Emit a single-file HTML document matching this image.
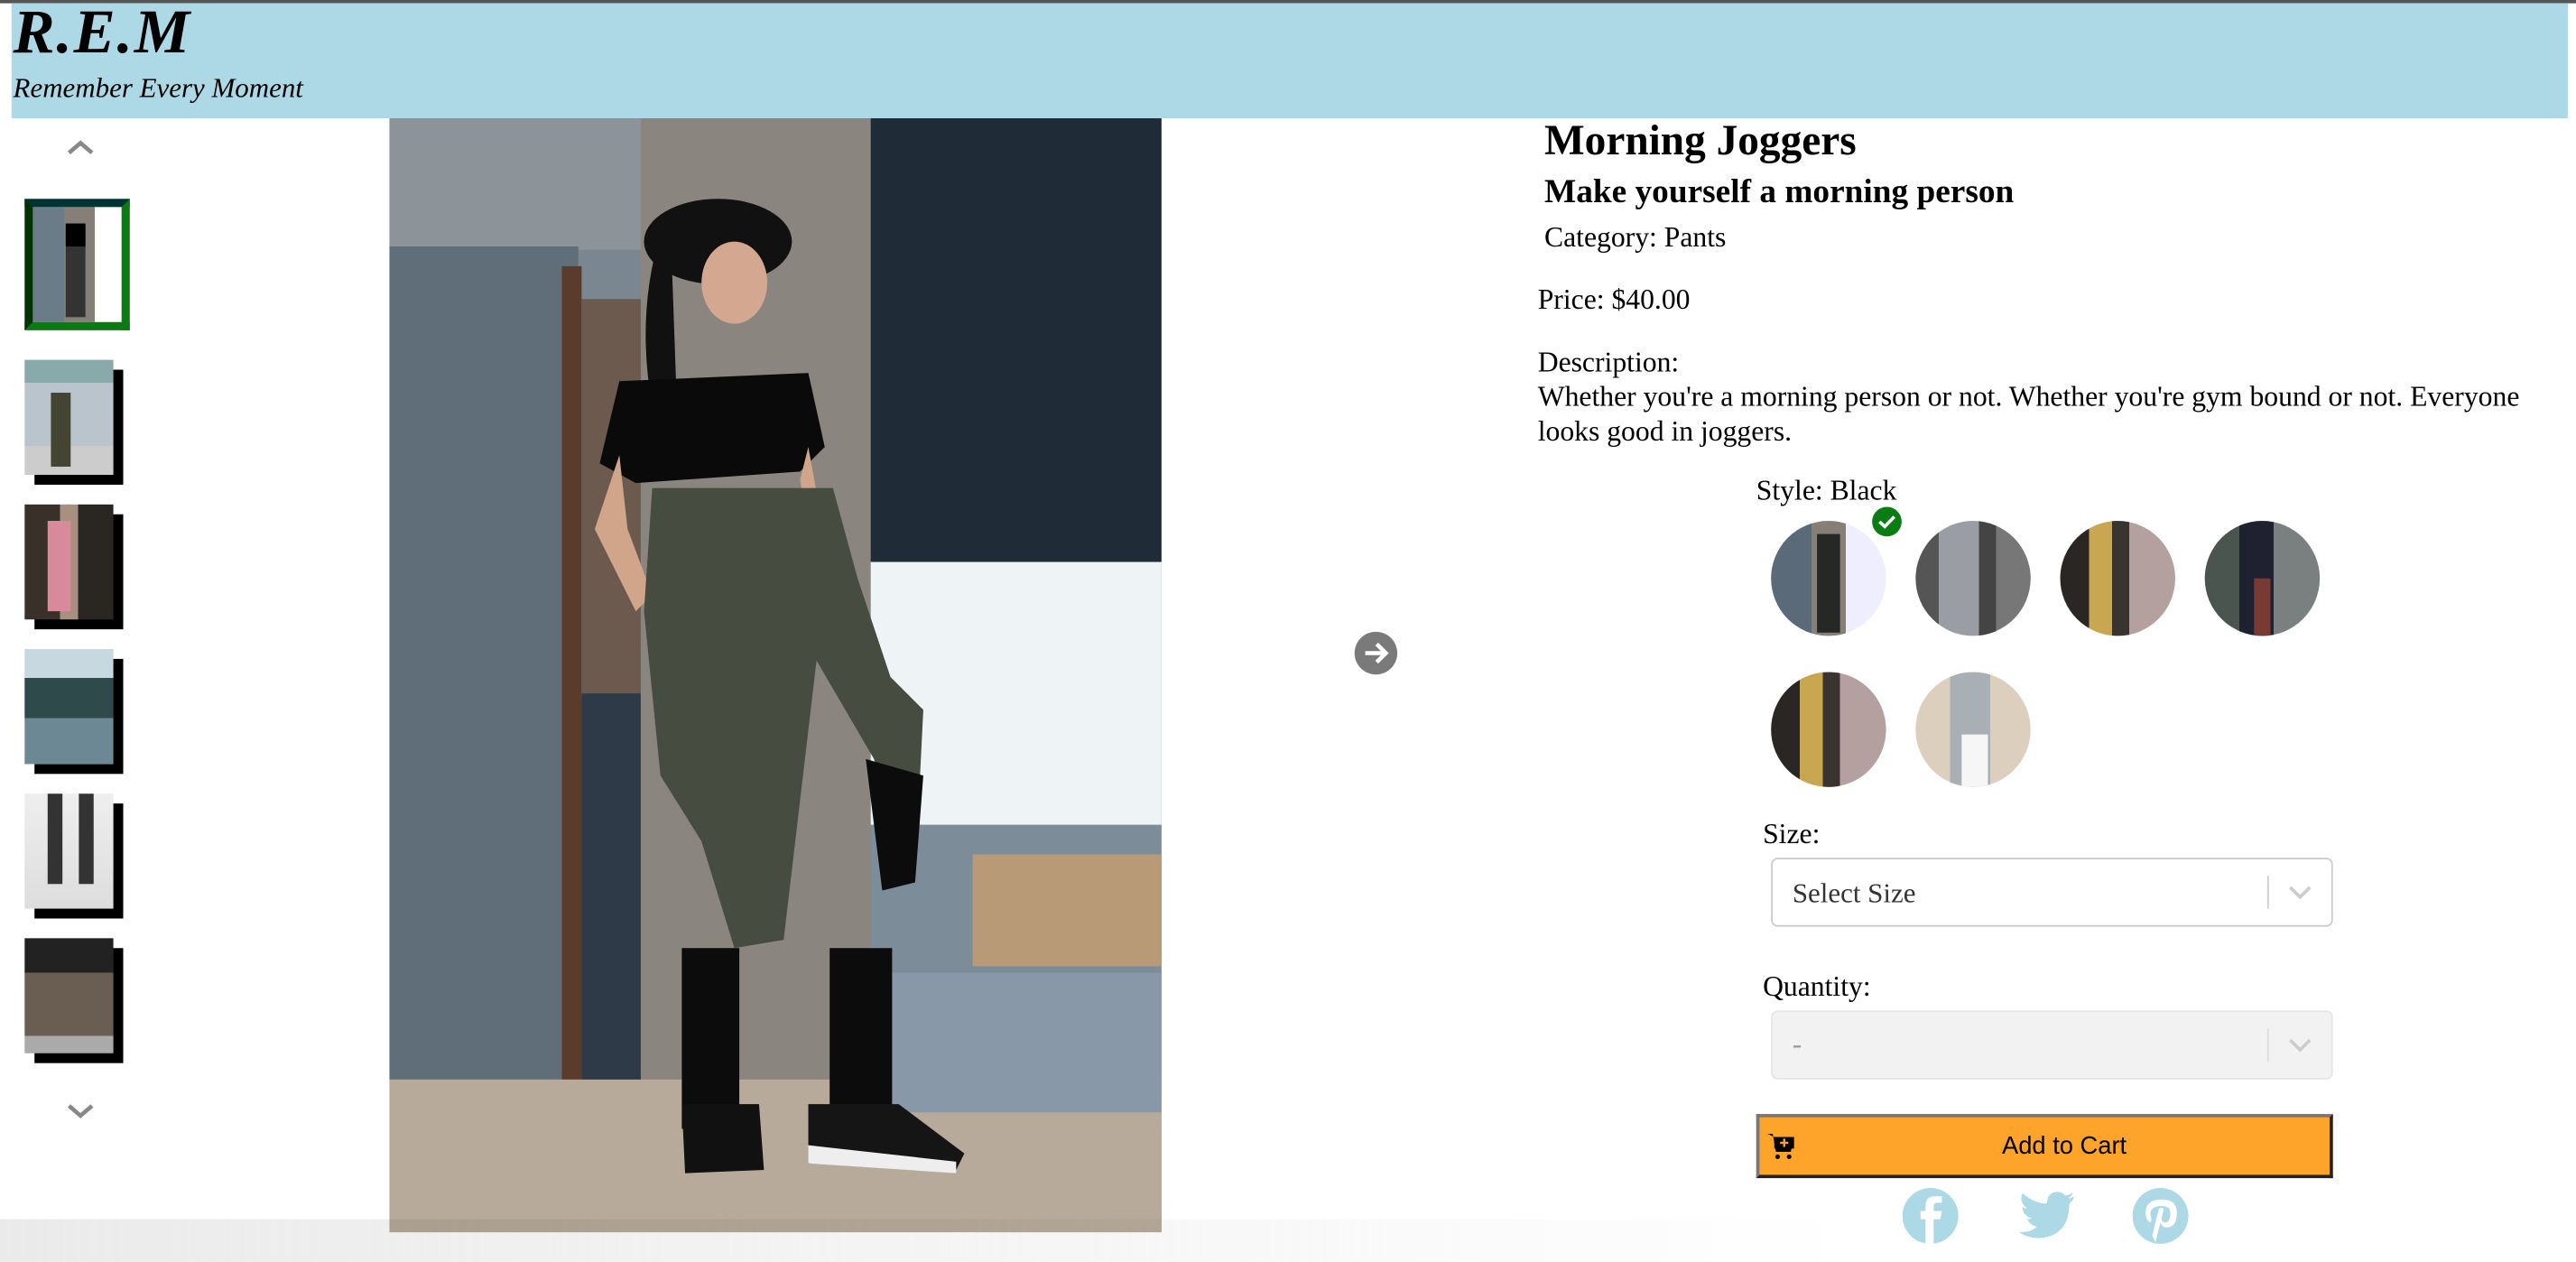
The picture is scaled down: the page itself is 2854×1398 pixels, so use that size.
<!DOCTYPE html>
<html><head><meta charset="utf-8"><style>
html,body{margin:0;padding:0;width:2854px;height:1398px;overflow:hidden;background:#fff}
#w{position:absolute;left:0;top:0;width:1568px;height:768px;transform:scale(1.8202);transform-origin:0 0;font-family:"Liberation Serif",serif;color:#000;background:#fff}
.a{position:absolute}
.t{position:absolute;white-space:nowrap}
.th{position:absolute;left:15px;width:54px;height:70px;box-shadow:6px 6px 0 #000;overflow:hidden}
.circ{position:absolute;width:70px;height:70px;border-radius:50%;overflow:hidden}
.sel{position:absolute;left:1078px;width:340px;height:40px;border:1px solid #ccc;border-radius:4px;background:#fff}
.b{font-size:17.4px}
</style></head><body><div id="w">
<div class="a" style="left:0;top:0;width:1568px;height:2px;background:#555"></div>
<div class="a" style="left:7px;top:2px;width:1556px;height:70px;background:#add8e6"></div>
<div class="t" style="left:8px;top:-2px;font-size:38px;font-weight:bold;font-style:italic;letter-spacing:1px">R.E.M</div>
<div class="t" style="left:8px;top:44px;font-size:17px;font-style:italic">Remember Every Moment</div>

<svg class="a" style="left:40px;top:84px" width="18" height="12"><path d="M2 9 L9 3 L16 9" stroke="#888" stroke-width="2.5" fill="none"/></svg>
<svg class="a" style="left:40px;top:670px" width="18" height="12"><path d="M2 3 L9 9 L16 3" stroke="#888" stroke-width="2.5" fill="none"/></svg>

<div class="a" style="left:15px;top:121px;width:54px;height:70px;border:5px solid #0a7a12;border-top-color:#033;border-left-color:#030;overflow:hidden;background:linear-gradient(90deg,#6a7c88 0 35%,#857f78 35% 70%,#fff 70%)">
<div class="a" style="left:20px;top:12px;width:12px;height:55px;background:#333"></div><div class="a" style="left:20px;top:10px;width:12px;height:14px;background:#000"></div></div>
<div class="th" style="top:219px;background:linear-gradient(#8aa 0 20%,#b9c4cc 20% 75%,#ccc 75%)"><div class="a" style="left:16px;top:20px;width:12px;height:45px;background:#443"></div></div>
<div class="th" style="top:307px;background:linear-gradient(90deg,#3a302a 0 40%,#a89080 40% 60%,#2a2622 60%)"><div class="a" style="left:14px;top:10px;width:14px;height:55px;background:#d88a9a"></div></div>
<div class="th" style="top:395px;background:linear-gradient(#c8d8e0 0 25%,#2f4a4a 25% 60%,#6c8894 60%)"></div>
<div class="th" style="top:483px;background:linear-gradient(#eee,#ddd)"><div class="a" style="left:14px;top:0;width:9px;height:55px;background:#333"></div><div class="a" style="left:33px;top:0;width:9px;height:55px;background:#333"></div></div>
<div class="th" style="top:571px;background:linear-gradient(#222 0 30%,#6a5e52 30% 85%,#aaa 85%)"></div>

<svg class="a" style="left:237px;top:72px" width="470" height="678" viewBox="0 0 470 678">
<rect width="470" height="678" fill="#7b8790"/>
<rect x="0" y="0" width="155" height="80" fill="#8d9499"/>
<rect x="0" y="78" width="115" height="507" fill="#5f6e79"/>
<rect x="105" y="90" width="12" height="495" fill="#5a3b2c"/>
<rect x="117" y="110" width="38" height="480" fill="#6d5a4f"/>
<rect x="117" y="350" width="38" height="240" fill="#2e3a47"/>
<rect x="153" y="0" width="140" height="600" fill="#8a857f"/>
<rect x="293" y="0" width="177" height="270" fill="#1f2b37"/>
<rect x="293" y="270" width="177" height="160" fill="#eef3f6"/>
<rect x="293" y="430" width="177" height="165" fill="#7c8c98"/>
<rect x="355" y="448" width="115" height="68" fill="#b89a76"/>
<rect x="0" y="585" width="470" height="93" fill="#b7aa9a"/>
<rect x="293" y="520" width="177" height="85" fill="#8898a8"/>
<ellipse cx="200" cy="75" rx="45" ry="26" fill="#111"/>
<path d="M165 70 Q150 120 160 175 L175 175 L172 90Z" fill="#111"/>
<ellipse cx="210" cy="100" rx="20" ry="25" fill="#d4a890"/>
<path d="M140 160 L255 155 L265 200 L250 215 L150 222 L128 210Z" fill="#0a0a0a"/>
<path d="M140 205 L125 250 L150 300 L160 290 L145 250Z" fill="#d0a58a"/>
<path d="M255 200 L275 310 L265 315 L250 220Z" fill="#d0a58a"/>
<path d="M160 225 L270 225 L285 280 L305 340 L325 360 L322 420 L305 425 L295 390 L260 330 L240 500 L210 505 L190 440 L165 400 L155 300Z" fill="#474c40"/>
<path d="M290 390 L325 400 L320 465 L300 470Z" fill="#0c0c0c"/>
<rect x="178" y="505" width="35" height="110" fill="#0c0c0c"/>
<rect x="268" y="505" width="38" height="100" fill="#0c0c0c"/>
<path d="M178 600 L225 600 L228 640 L180 642Z" fill="#111"/>
<path d="M255 600 L310 600 L350 630 L345 640 L255 636Z" fill="#151515"/>
<path d="M255 625 L345 635 L345 642 L255 636Z" fill="#eee"/>
</svg>

<svg class="a" style="left:824px;top:384px" width="27" height="27"><circle cx="13.5" cy="13.5" r="13" fill="#7a7a7a"/><path d="M7 13.5 H19 M14 8 L19.5 13.5 L14 19" stroke="#fff" stroke-width="2.5" fill="none"/></svg>

<div class="t" style="left:940px;top:71px;font-size:26px;font-weight:bold">Morning Joggers</div>
<div class="t" style="left:940px;top:106px;font-size:20.5px;font-weight:bold">Make yourself a morning person</div>
<div class="t b" style="left:940px;top:134px">Category: Pants</div>
<div class="t b" style="left:936px;top:172px">Price: $40.00</div>
<div class="t b" style="left:936px;top:210px">Description:</div>
<div class="a b" style="left:936px;top:231px;width:612px;line-height:21px">Whether you're a morning person or not. Whether you're gym bound or not. Everyone looks good in joggers.</div>

<div class="t b" style="left:1069px;top:288px">Style: Black</div>
<div class="circ" style="left:1078px;top:317px;background:linear-gradient(90deg,#5a6a78 0 35%,#857f78 35% 65%,#eef 65%)"><div class="a" style="left:28px;top:8px;width:14px;height:60px;background:#252825"></div></div>
<div class="circ" style="left:1166px;top:317px;background:linear-gradient(90deg,#555 0 20%,#9a9ea4 20% 55%,#444 55% 70%,#777 70%)"></div>
<div class="circ" style="left:1254px;top:317px;background:linear-gradient(90deg,#2a2624 0 25%,#c9a650 25% 45%,#3a3430 45% 60%,#b5a0a0 60%)"></div>
<div class="circ" style="left:1342px;top:317px;background:linear-gradient(90deg,#4a5550 0 30%,#1f2030 30% 60%,#7a8080 60%)"><div class="a" style="left:30px;top:35px;width:10px;height:35px;background:#7a3a34"></div></div>
<div class="circ" style="left:1078px;top:409px;background:linear-gradient(90deg,#2a2624 0 25%,#c9a650 25% 45%,#3a3430 45% 60%,#b5a0a0 60%)"></div>
<div class="circ" style="left:1166px;top:409px;background:linear-gradient(90deg,#dccfbd 0 30%,#a8b0b6 30% 65%,#dccfbd 65%)"><div class="a" style="left:28px;top:38px;width:16px;height:32px;background:#f6f6f6"></div></div>
<svg class="a" style="left:1139px;top:308px" width="19" height="19"><circle cx="9.5" cy="9.5" r="9" fill="#0a7d12"/><path d="M5 9.5 L8.2 12.5 L14 6.5" stroke="#fff" stroke-width="2" fill="none"/></svg>

<div class="t b" style="left:1073px;top:497px">Size:</div>
<div class="sel" style="top:522px"><div class="t" style="left:12px;top:11px;font-size:17px;color:#333">Select Size</div>
<div class="a" style="left:301px;top:10px;width:1px;height:20px;background:#ccc"></div>
<svg class="a" style="left:313px;top:14px" width="16" height="12"><path d="M2 3 L8 9 L14 3" stroke="#ccc" stroke-width="2" fill="none"/></svg></div>

<div class="t b" style="left:1073px;top:590px">Quantity:</div>
<div class="sel" style="top:615px;background:#f2f2f2;border-color:#e6e6e6"><div class="t" style="left:12px;top:10px;font-size:17px;color:#999">-</div>
<div class="a" style="left:301px;top:10px;width:1px;height:20px;background:#ddd"></div>
<svg class="a" style="left:313px;top:14px" width="16" height="12"><path d="M2 3 L8 9 L14 3" stroke="#ccc" stroke-width="2" fill="none"/></svg></div>

<div class="a" style="left:1069px;top:678px;width:347px;height:35px;background:#fea42b;border:2px solid;border-color:#777 #222 #222 #777"></div>
<div class="t" style="left:1093px;top:689px;width:327px;text-align:center;font-family:'Liberation Sans',sans-serif;font-size:15px">Add to Cart</div>
<svg class="a" style="left:1075px;top:688px" width="18" height="18" viewBox="0 0 18 18"><path d="M1 2 H4 L6 13 H15 L17 4 H5" fill="#000"/><rect x="5" y="4" width="12" height="7" fill="#000"/><path d="M11 5 V10 M8.5 7.5 H13.5" stroke="#fea42b" stroke-width="1.3"/><circle cx="7" cy="16" r="1.4"/><circle cx="14" cy="16" r="1.4"/></svg>

<svg class="a" style="left:1158px;top:722px" width="34" height="36" viewBox="0 0 34 36"><circle cx="17" cy="18" r="17" fill="#add8e6"/><path d="M19 36 V20 H23 L24 15 H19 V12 Q19 10 21 10 H24 V6 H20 Q14 6 14 12 V15 H11 V20 H14 V36Z" fill="#fff"/></svg>
<svg class="a" style="left:1228px;top:724px" width="36" height="32" viewBox="0 0 24 20"><path d="M23 2 Q21.5 3 20.5 3 Q22 2 22.5 0.5 Q21 1.5 19.5 1.8 Q18 0.2 16 0.2 Q12 0.5 12 5 Q7 5 2 0.8 Q0.5 4.5 4 7 Q3 7 2 6.5 Q2.2 10 6 11 Q5 11.4 4 11.2 Q5 14 8 14.3 Q5 17 0.5 16.5 Q4 19 9 19 Q21 18 21 5 Q22.5 4 23 2Z" fill="#add8e6"/></svg>
<svg class="a" style="left:1298px;top:722px" width="34" height="36" viewBox="0 0 34 36"><circle cx="17" cy="18" r="17" fill="#add8e6"/><path d="M14 34 L17 22 Q18 25 21 25 Q27 25 27 16 Q27 8 18 8 Q8 8 8 16 Q8 21 11 22 Q12 20 11 18 Q10 12 18 12 Q23 12 23 16 Q23 22 20 22 Q17 22 18 18 L19 14 Q18 12 16 14 L12 30Z" fill="#fff"/></svg>

<div class="a" style="left:0;top:742px;width:1568px;height:26px;background:linear-gradient(90deg,rgba(232,232,232,0.9) 0%,rgba(245,245,245,0.5) 55%,rgba(255,255,255,0) 72%);pointer-events:none;mix-blend-mode:multiply"></div>
</div></body></html>
